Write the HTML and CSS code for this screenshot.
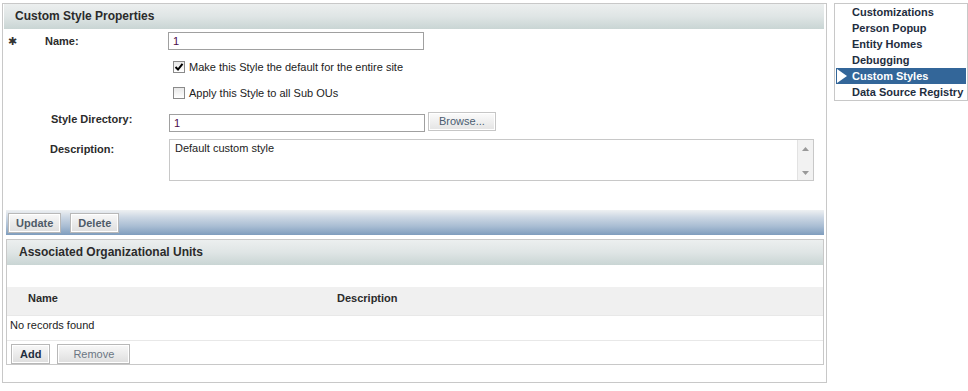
FILE: index.html
```html
<!DOCTYPE html>
<html>
<head>
<meta charset="utf-8">
<link rel="stylesheet" href="styles.css">
</head>
<body>
<div class="page">
  <div class="main">
    <div class="panel-head">Custom Style Properties</div>
    <div class="form">
      <div class="row row-name">
        <span class="req">&#x2731;</span>
        <label class="lbl lbl-name">Name:</label>
        <input class="txt" type="text" value="1">
      </div>
      <div class="row row-check row-check1">
        <span class="cb checked"><svg width="10" height="10" viewBox="0 0 10 10"><path d="M1.5 5 L4 7.5 L8.5 1.8" fill="none" stroke="#000" stroke-width="2"/></svg></span>
        <span class="cb-text">Make this Style the default for the entire site</span>
      </div>
      <div class="row row-check row-check2">
        <span class="cb"></span>
        <span class="cb-text">Apply this Style to all Sub OUs</span>
      </div>
      <div class="row row-dir">
        <label class="lbl lbl-dir">Style Directory:</label>
        <input class="txt" type="text" value="1">
        <span class="btn-browse">Browse...</span>
      </div>
      <div class="row row-desc">
        <label class="lbl lbl-desc">Description:</label>
        <div class="area">
          <div class="area-text">Default custom style</div>
          <div class="area-scroll">
            <svg width="7" height="4" viewBox="0 0 7 4"><path d="M0 4 L3.5 0 L7 4 Z" fill="#999"/></svg>
            <svg width="7" height="4" viewBox="0 0 7 4"><path d="M0 0 L3.5 4 L7 0 Z" fill="#999"/></svg>
          </div>
        </div>
      </div>
    </div>
    <div class="btnbar">
      <span class="btn">Update</span>
      <span class="btn">Delete</span>
    </div>
    <div class="sub">
      <div class="panel-head sub-head">Associated Organizational Units</div>
      <div class="tbl">
        <div class="tbl-head">
          <span class="col-name">Name</span>
          <span class="col-desc">Description</span>
        </div>
        <div class="tbl-row">No records found</div>
      </div>
      <div class="sub-btns">
        <span class="btn btn-add">Add</span>
        <span class="btn btn-remove">Remove</span>
      </div>
    </div>
  </div>
  <div class="side">
    <div class="nav-item">Customizations</div>
    <div class="nav-item">Person Popup</div>
    <div class="nav-item">Entity Homes</div>
    <div class="nav-item">Debugging</div>
    <div class="nav-item active"><svg class="arrow" width="10" height="14" viewBox="0 0 10 14"><path d="M0 0 L10 7 L0 14 Z" fill="#fff"/></svg>Custom Styles</div>
    <div class="nav-item">Data Source Registry</div>
  </div>
</div>
</body>
</html>
```
FILE: styles.css
```css
* { box-sizing: border-box; }
html, body { margin: 0; padding: 0; background: #fff; }
body { font-family: "Liberation Sans", Arial, sans-serif; font-size: 11px; color: #000; }

.page { display: flex; align-items: flex-start; padding: 3px 0 0 2px; }

.main {
  width: 825px;
  height: 380px;
  border: 1px solid #c8c8c8;
  padding: 0 2px 0 1px;
}

.panel-head {
  height: 25px;
  line-height: 25px;
  padding-left: 11px;
  font-weight: bold;
  font-size: 12px;
  color: #2b2b2b;
  background: linear-gradient(#ecefef, #dfe5e5 50%, #c9d5d4);
}

.form { height: 175px; }
.row { display: flex; align-items: center; }
.req { width: 41px; padding-left: 4px; font-size: 11px; color: #333; }
.lbl { font-weight: bold; color: #2b2b2b; }
.lbl-name { width: 123px; }
.row-name { margin-top: 3px; }
.txt {
  width: 256px; height: 18px;
  border: 1px solid #a0a0a0;
  padding: 0 0 0 4px;
  margin: 0;
  font-family: "Liberation Sans", Arial, sans-serif;
  font-size: 11px;
  color: #4b0a4b;
  background: #fff;
}
.row-check { padding-left: 169px; }
.row-check1 { margin-top: 11px; }
.row-check2 { margin-top: 14px; }
.cb {
  width: 12px; height: 12px;
  border: 1px solid #8a8a8a;
  background: linear-gradient(#e8e8e8, #fff);
  display: flex; align-items: center; justify-content: center;
  margin-right: 4px;
}
.cb-text { color: #222; }
.row-dir { margin-top: 13px; padding-left: 47px; align-items: flex-start; }
.lbl-dir { width: 118px; padding-top: 1px; }
.row-dir .txt { margin-top: 2px; }
.btn-browse {
  margin-left: 3px;
  height: 19px; line-height: 17px;
  padding: 0 10px;
  border: 1px solid #c6c6c6;
  background: linear-gradient(#fbfbfb, #e4e4e4);
  color: #4a5c70;
  box-shadow: inset 0 0 0 1px #fff;
}
.row-desc { margin-top: 7px; padding-left: 46px; align-items: flex-start; }
.lbl-desc { width: 119px; padding-top: 4px; }
.area {
  width: 645px; height: 42px;
  border: 1px solid #c8c8c8;
  display: flex;
}
.area-text { flex: 1; padding: 2px 5px; color: #222; }
.area-scroll {
  width: 16px;
  background: #f2f2f2;
  border-left: 1px solid #e2e2e2;
  display: flex; flex-direction: column; align-items: center; justify-content: space-between;
  padding: 7px 0 5px;
}

.btnbar {
  margin-top: 3px;
  margin-left: 2px;
  height: 25px;
  background: linear-gradient(#eef0f2, #cbd6e3 30%, #a9bdd3 65%, #7f9dbd);
  display: flex; align-items: center; gap: 9px;
  padding-left: 2px;
}
.btn {
  height: 20px; line-height: 18px;
  padding: 0 7px;
  border: 1px solid #b8b8b8;
  box-shadow: inset 0 0 0 1px #fff;
  background: linear-gradient(#f8f8f8, #dedede);
  font-weight: bold;
  color: #4f5b68;
}

.sub {
  margin: 4px 0 0 2px;
  height: 126px;
  border: 1px solid #c8c8c8;
}
.sub-head { padding-left: 12px; }
.tbl { margin-top: 22px; }
.tbl-head {
  height: 28px; line-height: 22px;
  background: #f0f0f0;
  font-weight: bold;
  color: #2b2b2b;
  display: flex;
}
.col-name { width: 330px; padding-left: 21px; }
.tbl-row {
  height: 26px; line-height: 19px;
  border-top: 1px solid #e8e8e8;
  border-bottom: 1px solid #e8e8e8;
  padding-left: 3px;
  color: #222;
}
.sub-btns { display: flex; gap: 7px; padding: 3px 0 0 4px; }
.btn-add { color: #1e2d3e; padding: 0 8px; }
.btn-remove { font-weight: normal; color: #6b7683; padding: 0 15px; }

.side {
  margin-left: 7px;
  width: 134px;
  border: 1px solid #c8c8c8;
  padding: 0 0 0 1px;
}
.nav-item {
  height: 16px; line-height: 16px;
  padding-left: 16px;
  font-weight: bold;
  color: #1e2d3e;
  white-space: nowrap;
  position: relative;
}
.nav-item.active { background: #336699; color: #fff; margin-right: 1px; }
.arrow { position: absolute; left: 1px; top: 1px; }
```
